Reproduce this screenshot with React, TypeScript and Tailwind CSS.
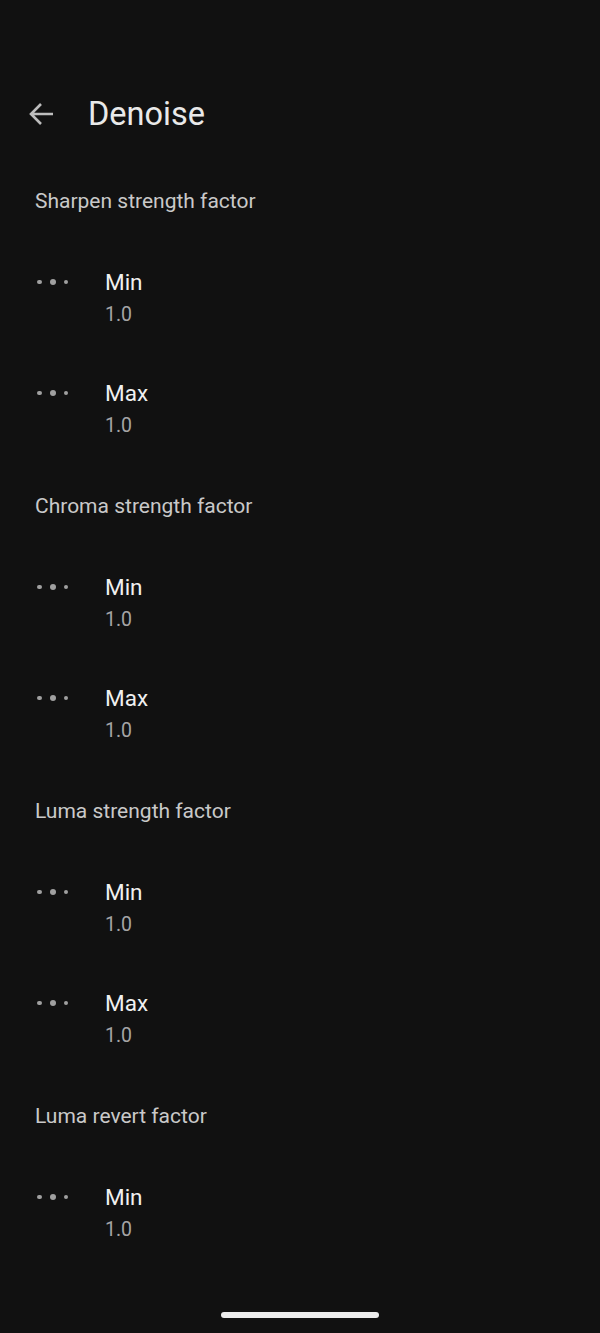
import React from "react";

const sections = [
  { title: "Sharpen strength factor", items: ["Min", "Max"] },
  { title: "Chroma strength factor", items: ["Min", "Max"] },
  { title: "Luma strength factor", items: ["Min", "Max"] },
  { title: "Luma revert factor", items: ["Min"] },
];

function Dots() {
  return (
    <div className="flex h-[32px] w-[70px] shrink-0 items-center gap-[8px] pl-[37px]">
      <span className="block h-[4.5px] w-[4.5px] rounded-full bg-[#a0a0a0]" />
      <span className="block h-[6px] w-[6px] rounded-full bg-[#a0a0a0]" />
      <span className="block h-[4.5px] w-[4.5px] rounded-full bg-[#a0a0a0]" />
    </div>
  );
}

export default function App() {
  return (
    <div
      className="relative h-[1333px] w-[600px] overflow-hidden bg-[#111111]"
      style={{ fontFamily: "Roboto, 'Noto Sans', sans-serif" }}
    >
      <div className="pt-[81px]">
        <div className="flex h-[66px] items-center">
          <div className="flex w-[88px] items-center pl-[28px]">
            <svg width="26" height="24" viewBox="0 0 26 24" fill="none">
              <path
                d="M25 12H3M13 2L3 12l10 10"
                stroke="#bdbdbd"
                strokeWidth="2.6"
                strokeLinecap="butt"
                strokeLinejoin="miter"
              />
            </svg>
          </div>
          <h1 className="text-[32.5px] font-normal text-[#e9e9e9]">Denoise</h1>
        </div>
      </div>
      <div className="mt-[13px]">
        {sections.map((s) => (
          <div key={s.title}>
            <div className="flex h-[83px] items-center pl-[35px] text-[21px] text-[#c9c9c9]">
              {s.title}
            </div>
            {s.items.map((it) => (
              <div key={it} className="flex h-[111px] items-center">
                <div className="flex items-start">
                  <Dots />
                  <div className="pl-[35px]">
                    <div className="text-[22.5px] leading-[32px] text-[#f0f0f0]">{it}</div>
                    <div className="pt-[1px] text-[19.5px] leading-[32px] text-[#a5a5a5]">1.0</div>
                  </div>
                </div>
              </div>
            ))}
          </div>
        ))}
      </div>
      <div className="absolute bottom-[15px] left-[221px] h-[6px] w-[158px] rounded-full bg-[#ececec]" />
    </div>
  );
}
